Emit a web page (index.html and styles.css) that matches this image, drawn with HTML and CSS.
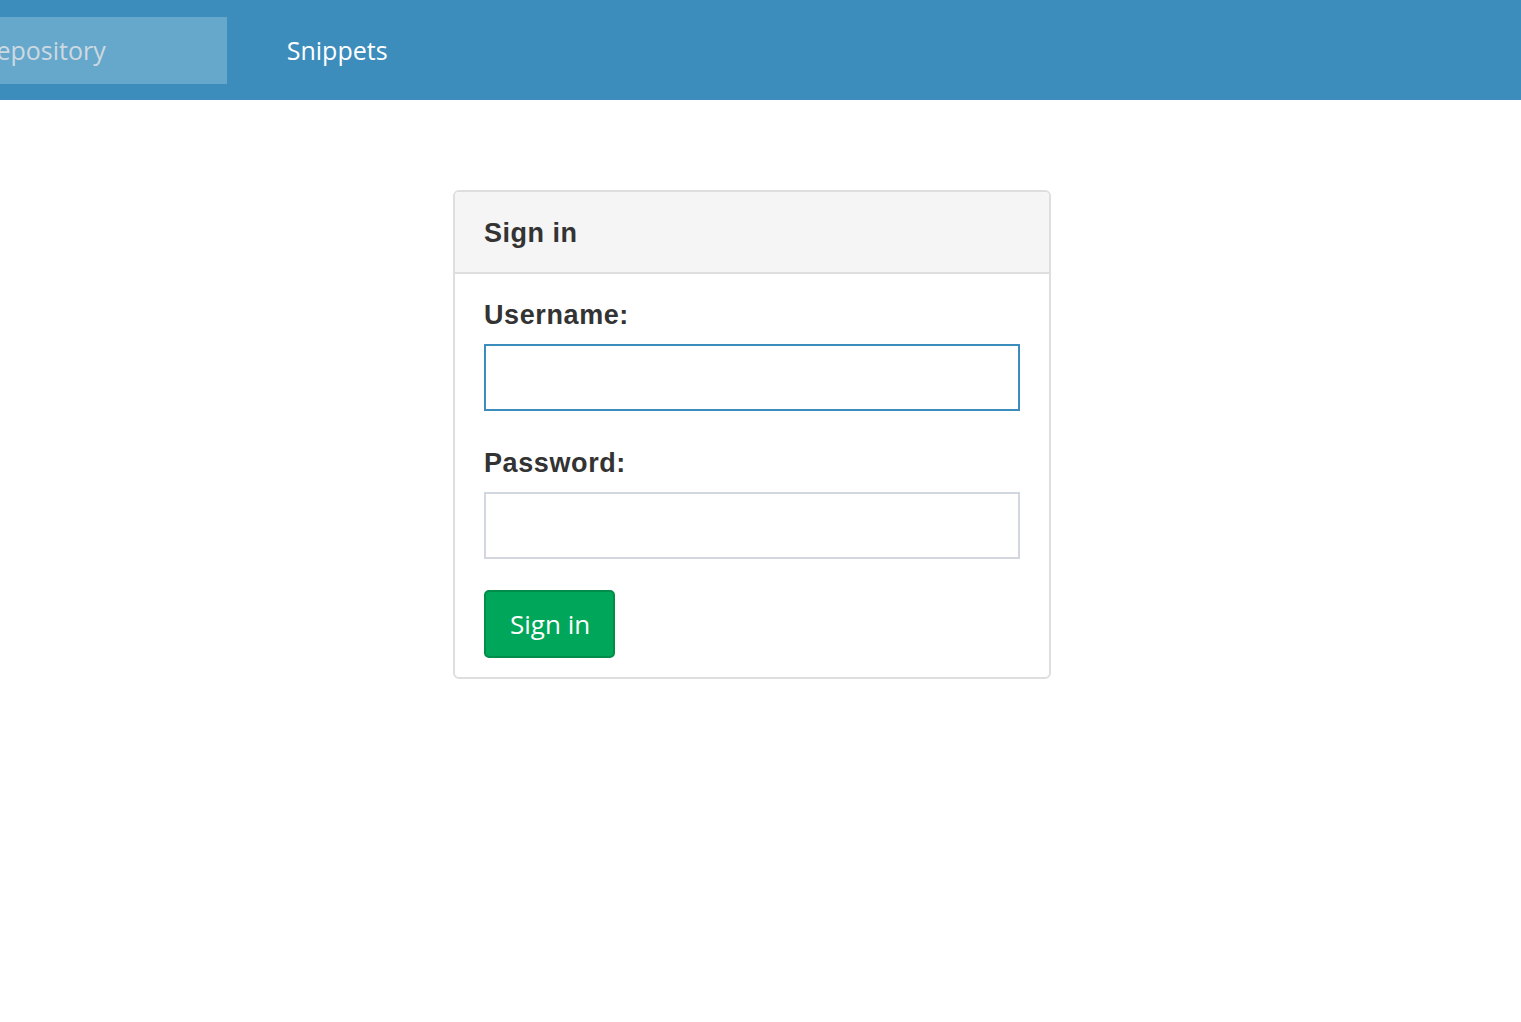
FILE: index.html
```html
<!DOCTYPE html>
<html>
<head>
<meta charset="utf-8">
<link rel="stylesheet" href="styles.css">
</head>
<body>
<header class="navbar">
  <ul class="nav">
    <li class="nav-item active">Repository</li>
    <li class="nav-item">Snippets</li>
  </ul>
</header>
<main class="main">
  <div class="card">
    <div class="card-header">Sign in</div>
    <form class="card-body">
      <label class="label">Username:</label>
      <input class="input focused" type="text">
      <label class="label">Password:</label>
      <input class="input" type="password">
      <button class="btn" type="button">Sign in</button>
    </form>
  </div>
</main>
</body>
</html>
```
FILE: styles.css
```css
html, body { margin: 0; padding: 0; background: #fff; }
body { font-family: "Liberation Sans", Arial, sans-serif; color: #333; }
.navbar {
  background: #3c8dbc;
  height: 100px;
  display: flex;
  align-items: center;
  overflow: hidden;
}
.nav {
  list-style: none;
  margin: 0 0 0 -60px;
  padding: 0;
  display: flex;
  height: 67px;
}
.nav-item {
  font-family: "Open Sans", "Noto Sans", sans-serif;
  font-size: 25px;
  line-height: 67px;
  color: #fff;
  padding: 0 60px;
}
.nav-item.active {
  background: #66a8cc;
  color: #cdd9e1;
  padding: 0 121px 0 41px;
}
.main {
  display: flex;
  justify-content: center;
  padding: 90px 17px 0 0;
}
.card {
  width: 594px;
  border: 2px solid #dedede;
  border-radius: 6px;
  background: #fff;
}
.card-header {
  background: #f5f5f5;
  height: 80px;
  line-height: 82px;
  padding: 0 29px;
  font-size: 27px;
  letter-spacing: 0.5px;
  font-weight: bold;
  border-bottom: 2px solid #dedede;
  border-radius: 5px 5px 0 0;
}
.card-body {
  display: flex;
  flex-direction: column;
  align-items: flex-start;
  padding: 23px 29px 19px;
}
.label {
  font-size: 27px;
  letter-spacing: 0.6px;
  font-weight: bold;
  line-height: 36px;
  margin-bottom: 11px;
}
.input {
  box-sizing: border-box;
  width: 536px;
  height: 67px;
  border: 2px solid #d2d6de;
  margin: 0 0 34px;
  padding: 0 12px;
  outline: none;
  font-size: 22px;
}
.input.focused { border-color: #3c8dbc; }
.input + .label + .input { margin-bottom: 31px; }
.btn {
  box-sizing: border-box;
  height: 68px;
  padding: 0 23px 0 24px;
  background: #00a65a;
  border: 2px solid #008d4c;
  border-radius: 5px;
  color: #fff;
  font-family: "Open Sans", "Noto Sans", sans-serif;
  font-size: 26px;
  cursor: pointer;
}
```
